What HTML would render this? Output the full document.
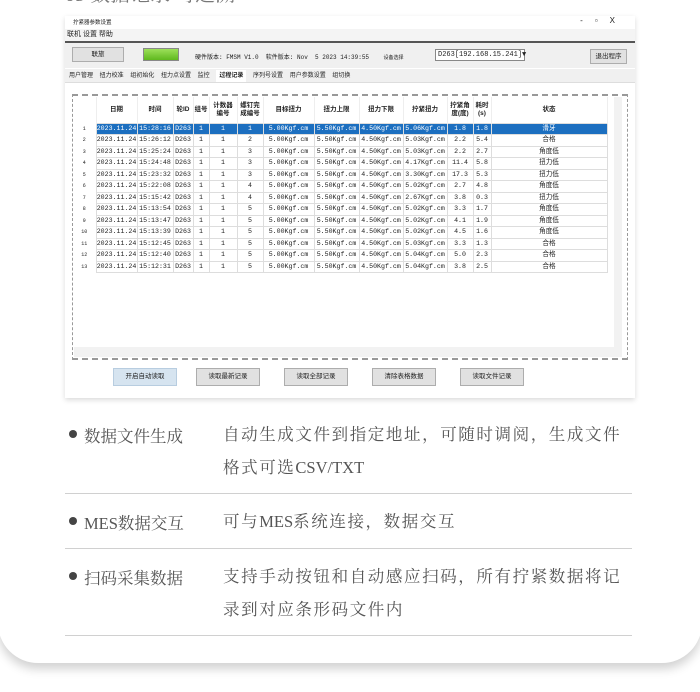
<!DOCTYPE html>
<html><head><meta charset="utf-8"><style>
*{margin:0;padding:0;box-sizing:border-box}
body{width:700px;height:692px;background:#fff;position:relative;overflow:hidden;font-family:"Liberation Sans","Noto Sans CJK SC",sans-serif}
.card{position:absolute;left:-2px;top:-40px;width:704px;height:703px;background:#fff;border-radius:0 0 40px 40px;box-shadow:0 6px 10px rgba(0,0,0,0.18)}
.abs{position:absolute}
.title{left:65px;top:-22px;font:20px "Liberation Serif","Noto Serif CJK SC",serif;color:#777;white-space:nowrap}
.win{left:65px;top:16px;width:570px;height:382px;background:#fff;box-shadow:0 2px 5px rgba(0,0,0,0.15);font-size:7px;color:#222}
table{border-collapse:collapse;position:absolute;left:8px;top:81px;font-family:"Liberation Mono","Noto Sans CJK SC",monospace;font-size:6.6px}
td{border:1px solid #ddd;height:11.5px;text-align:center;white-space:nowrap;padding:0;line-height:10px;overflow:hidden}
th{height:26px;font-weight:bold;font-size:6.5px;line-height:8px;border-right:1px solid #eee;font-family:"Liberation Sans","Noto Sans CJK SC",sans-serif}
tr.sel td{background:#1c6fc0;color:#fff}
td.n{border:none;font-size:5px;background:#fff!important;color:#222!important}
.btn{position:absolute;top:352px;width:64px;height:18px;background:#e1e1e1;border:1px solid #adadad;text-align:center;line-height:16px;font-size:6.5px}
.row{position:absolute;left:65px;width:567px;font:16.5px "Liberation Serif","Noto Serif CJK SC",serif;color:#555}
.row .b{position:absolute;left:4px;width:8px;height:8px;border-radius:50%;background:#444}
.row .l{position:absolute;left:19px;white-space:nowrap}
.row .d{position:absolute;left:158px;width:408px;line-height:33px;letter-spacing:1.6px}
.row .d i{font-style:normal;letter-spacing:0}
.hr{position:absolute;left:65px;width:567px;height:1px;background:#d0d0d0}
</style></head><body>
<div class="card"></div>
<div class="abs title">05 数据记录 可追溯</div>
<div class="abs win">
 <div class="abs" style="left:8px;top:2px;font-size:5.5px">拧紧器参数设置</div>
 <div class="abs" style="right:8px;top:0px;font-size:8px;letter-spacing:12px">-▫X</div>
 <div class="abs" style="left:0;top:13px;width:570px;height:12px;background:#f4f4f4;font-size:7px;padding-left:2px;line-height:12px">联机 设置 帮助</div>
 <div class="abs" style="left:0;top:25px;width:570px;height:2px;background:#555"></div>
 <div class="abs" style="left:0;top:27px;width:570px;height:25px;background:#f0f0f0"></div>
 <div class="abs" style="left:7px;top:31px;width:52px;height:15px;background:#e1e1e1;border:1px solid #adadad;text-align:center;line-height:13px;font-size:6.5px">联旅</div>
 <div class="abs" style="left:78px;top:32px;width:36px;height:13px;background:linear-gradient(#9de05a,#5fb81e);border:1px solid #888"></div>
 <div class="abs" style="left:130px;top:36px;font-size:6px;white-space:nowrap;font-family:'Liberation Mono','Noto Sans CJK SC',monospace">硬件版本: FMSM V1.0 &nbsp;软件版本: Nov &nbsp;5 2023 14:39:55 &nbsp; &nbsp;<span style="font-size:5px">设备选择</span></div>
 <div class="abs" style="left:370px;top:33px;width:90px;height:12px;background:#fff;border:1px solid #888;font-size:7px;line-height:10px;padding-left:2px;white-space:nowrap;font-family:'Liberation Mono',monospace">D263[192.168.15.241]▼</div>
 <div class="abs" style="left:525px;top:33px;width:37px;height:15px;background:#e1e1e1;border:1px solid #adadad;text-align:center;line-height:13px;font-size:6.5px">退出程序</div>
 <div class="abs" style="left:0;top:53px;width:570px;height:14px;background:#f0f0f0;border-bottom:1px solid #ddd;font-size:6px;line-height:14px;white-space:nowrap;padding-left:4px;word-spacing:5px">用户管理 扭力校准 组初始化 扭力点设置 监控 <span style="background:#fff;padding:3px 3px;font-weight:bold">过程记录</span> 序列号设置 用户参数设置 组切换</div>
 <div class="abs" style="left:7px;top:78px;width:556px;height:266px;border:1px dashed #999;border-width:2px 1px 2px 1px"></div>
 <div class="abs" style="left:549px;top:81px;width:8px;height:250px;background:#f2f2f2"></div>
 <div class="abs" style="left:9px;top:331px;width:548px;height:10px;background:#f2f2f2"></div>
 <table>
 <tr><th style="width:23px"></th><th style="width:41px">日期</th><th style="width:36px">时间</th><th style="width:20px">轮ID</th><th style="width:16px">组号</th><th style="width:28px">计数器<br>编号</th><th style="width:26px">螺钉完<br>成编号</th><th style="width:51px">目标扭力</th><th style="width:45px">扭力上限</th><th style="width:44px">扭力下限</th><th style="width:44px">拧紧扭力</th><th style="width:26px">拧紧角<br>度(度)</th><th style="width:18px">耗时<br>(s)</th><th style="width:116px">状态</th></tr>
 <tr class="sel"><td class="n">1</td><td>2023.11.24</td><td>15:28:16</td><td>D263</td><td>1</td><td>1</td><td>1</td><td>5.00Kgf.cm</td><td>5.50Kgf.cm</td><td>4.50Kgf.cm</td><td>5.06Kgf.cm</td><td>1.8</td><td>1.8</td><td>滑牙</td></tr>
 <tr><td class="n">2</td><td>2023.11.24</td><td>15:26:12</td><td>D263</td><td>1</td><td>1</td><td>2</td><td>5.00Kgf.cm</td><td>5.50Kgf.cm</td><td>4.50Kgf.cm</td><td>5.03Kgf.cm</td><td>2.2</td><td>5.4</td><td>合格</td></tr>
 <tr><td class="n">3</td><td>2023.11.24</td><td>15:25:24</td><td>D263</td><td>1</td><td>1</td><td>3</td><td>5.00Kgf.cm</td><td>5.50Kgf.cm</td><td>4.50Kgf.cm</td><td>5.03Kgf.cm</td><td>2.2</td><td>2.7</td><td>角度低</td></tr>
 <tr><td class="n">4</td><td>2023.11.24</td><td>15:24:48</td><td>D263</td><td>1</td><td>1</td><td>3</td><td>5.00Kgf.cm</td><td>5.50Kgf.cm</td><td>4.50Kgf.cm</td><td>4.17Kgf.cm</td><td>11.4</td><td>5.8</td><td>扭力低</td></tr>
 <tr><td class="n">5</td><td>2023.11.24</td><td>15:23:32</td><td>D263</td><td>1</td><td>1</td><td>3</td><td>5.00Kgf.cm</td><td>5.50Kgf.cm</td><td>4.50Kgf.cm</td><td>3.30Kgf.cm</td><td>17.3</td><td>5.3</td><td>扭力低</td></tr>
 <tr><td class="n">6</td><td>2023.11.24</td><td>15:22:08</td><td>D263</td><td>1</td><td>1</td><td>4</td><td>5.00Kgf.cm</td><td>5.50Kgf.cm</td><td>4.50Kgf.cm</td><td>5.02Kgf.cm</td><td>2.7</td><td>4.8</td><td>角度低</td></tr>
 <tr><td class="n">7</td><td>2023.11.24</td><td>15:15:42</td><td>D263</td><td>1</td><td>1</td><td>4</td><td>5.00Kgf.cm</td><td>5.50Kgf.cm</td><td>4.50Kgf.cm</td><td>2.67Kgf.cm</td><td>3.8</td><td>0.3</td><td>扭力低</td></tr>
 <tr><td class="n">8</td><td>2023.11.24</td><td>15:13:54</td><td>D263</td><td>1</td><td>1</td><td>5</td><td>5.00Kgf.cm</td><td>5.50Kgf.cm</td><td>4.50Kgf.cm</td><td>5.02Kgf.cm</td><td>3.3</td><td>1.7</td><td>角度低</td></tr>
 <tr><td class="n">9</td><td>2023.11.24</td><td>15:13:47</td><td>D263</td><td>1</td><td>1</td><td>5</td><td>5.00Kgf.cm</td><td>5.50Kgf.cm</td><td>4.50Kgf.cm</td><td>5.02Kgf.cm</td><td>4.1</td><td>1.9</td><td>角度低</td></tr>
 <tr><td class="n">10</td><td>2023.11.24</td><td>15:13:39</td><td>D263</td><td>1</td><td>1</td><td>5</td><td>5.00Kgf.cm</td><td>5.50Kgf.cm</td><td>4.50Kgf.cm</td><td>5.02Kgf.cm</td><td>4.5</td><td>1.6</td><td>角度低</td></tr>
 <tr><td class="n">11</td><td>2023.11.24</td><td>15:12:45</td><td>D263</td><td>1</td><td>1</td><td>5</td><td>5.00Kgf.cm</td><td>5.50Kgf.cm</td><td>4.50Kgf.cm</td><td>5.03Kgf.cm</td><td>3.3</td><td>1.3</td><td>合格</td></tr>
 <tr><td class="n">12</td><td>2023.11.24</td><td>15:12:40</td><td>D263</td><td>1</td><td>1</td><td>5</td><td>5.00Kgf.cm</td><td>5.50Kgf.cm</td><td>4.50Kgf.cm</td><td>5.04Kgf.cm</td><td>5.0</td><td>2.3</td><td>合格</td></tr>
 <tr><td class="n">13</td><td>2023.11.24</td><td>15:12:31</td><td>D263</td><td>1</td><td>1</td><td>5</td><td>5.00Kgf.cm</td><td>5.50Kgf.cm</td><td>4.50Kgf.cm</td><td>5.04Kgf.cm</td><td>3.8</td><td>2.5</td><td>合格</td></tr>
 </table>
 <div class="btn" style="left:48px;background:#d6e4f0;border-color:#b8cde0">开启自动读取</div>
 <div class="btn" style="left:131px">读取最新记录</div>
 <div class="btn" style="left:219px">读取全部记录</div>
 <div class="btn" style="left:307px">清除表格数据</div>
 <div class="btn" style="left:395px">读取文件记录</div>
</div>
<div class="row" style="top:418px"><span class="b" style="top:12px"></span><span class="l" style="top:5px">数据文件生成</span><div class="d" style="top:0">自动生成文件到指定地址，可随时调阅，生成文件格式可选<i>CSV/TXT</i></div></div>
<div class="hr" style="top:493px"></div>
<div class="row" style="top:505px"><span class="b" style="top:12px"></span><span class="l" style="top:5px">MES数据交互</span><div class="d" style="top:0">可与<i>MES</i>系统连接，数据交互</div></div>
<div class="hr" style="top:548px"></div>
<div class="row" style="top:560px"><span class="b" style="top:12px"></span><span class="l" style="top:5px">扫码采集数据</span><div class="d" style="top:0">支持手动按钮和自动感应扫码，所有拧紧数据将记录到对应条形码文件内</div></div>
<div class="hr" style="top:635px"></div>
</body></html>
